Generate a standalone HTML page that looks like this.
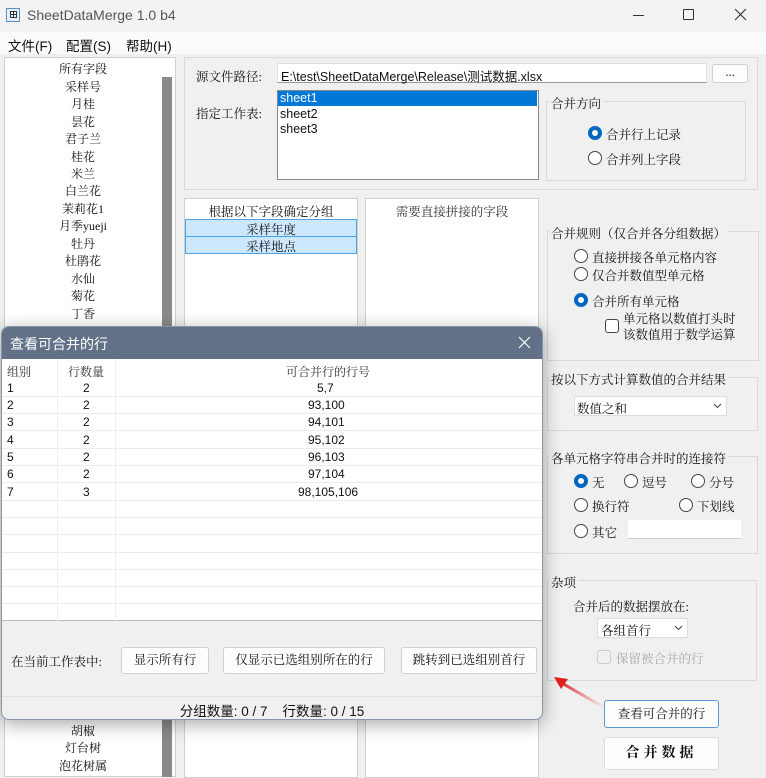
<!DOCTYPE html>
<html><head><meta charset="utf-8">
<style>
*{box-sizing:border-box;margin:0;padding:0}
body{width:766px;height:770px;overflow:hidden;background:#f0f0f0;font-family:"Liberation Sans","Noto Sans CJK SC",sans-serif;font-size:12px;color:#111;position:relative}
.a{position:absolute}
.serif{font-family:"Liberation Serif","Noto Serif CJK SC",serif}
.box{position:absolute;border:1px solid #d9d9d9}
.white{background:#fff}
.li{position:absolute;left:4px;width:158px;text-align:center;font-size:12px;font-family:"Liberation Serif","Noto Serif CJK SC",serif}
.radio{position:absolute;width:14px;height:14px;border:1px solid #444;border-radius:50%;background:#fff}
.radio.on{border:4px solid #0067c0;background:#fff}
.lbl{position:absolute;font-family:"Liberation Serif","Noto Serif CJK SC",serif;font-size:12.5px;white-space:nowrap}
.btn{position:absolute;background:#fdfdfd;border:1px solid #d0d0d0;border-radius:3px;text-align:center;font-family:"Liberation Serif","Noto Serif CJK SC",serif;font-size:12.5px}
.gtitle{position:absolute;background:#f0f0f0;padding:0 2px;font-family:"Liberation Serif","Noto Serif CJK SC",serif;font-size:12.5px}
.row{position:absolute;left:0;width:541px;height:17px;border-bottom:1px solid #ececec;font-size:12px}
.row span{position:absolute;top:1px}
</style></head><body>
<div class="a" style="left:0;top:0;width:766px;height:32px;background:#f3f3f3"></div>
<div class="a" style="left:6px;top:8px;width:14px;height:14px;border:1px solid #5a8fc8;background:#e8f1fb"></div>
<div class="a" style="left:10px;top:11px;width:7px;height:7px;border:1px solid #333"></div>
<div class="a" style="left:13px;top:11px;width:1px;height:7px;background:#333"></div>
<div class="a" style="left:10px;top:14px;width:7px;height:1px;background:#333"></div>
<div class="a" style="left:27px;top:7px;font-size:14px;color:#555">SheetDataMerge 1.0 b4</div>
<div class="a" style="left:633px;top:15px;width:11px;height:1px;background:#333"></div>
<div class="a" style="left:683px;top:9px;width:11px;height:11px;border:1px solid #333;border-radius:1px"></div>
<svg class="a" style="left:734px;top:8px" width="13" height="13"><path d="M1 1L12 12M12 1L1 12" stroke="#333" stroke-width="1.1"/></svg>
<div class="a" style="left:0;top:32px;width:766px;height:22px;background:#fbfbfb"></div>
<div class="a" style="left:8px;top:35px;font-size:13.5px">文件(F)</div>
<div class="a" style="left:66px;top:35px;font-size:13.5px">配置(S)</div>
<div class="a" style="left:126px;top:35px;font-size:13.5px">帮助(H)</div>
<div class="box white" style="left:4px;top:57px;width:172px;height:720px;border-color:#cfcfcf"></div>
<div class="a" style="left:162px;top:77px;width:10px;height:700px;background:#8a8a8a"></div>
<div class="li" style="top:60px">所有字段</div>
<div class="li" style="top:78px">采样号</div>
<div class="li" style="top:95px">月桂</div>
<div class="li" style="top:113px">昙花</div>
<div class="li" style="top:130px">君子兰</div>
<div class="li" style="top:148px">桂花</div>
<div class="li" style="top:165px">米兰</div>
<div class="li" style="top:182px">白兰花</div>
<div class="li" style="top:200px">茉莉花1</div>
<div class="li" style="top:217px">月季yueji</div>
<div class="li" style="top:235px">牡丹</div>
<div class="li" style="top:252px">杜鹃花</div>
<div class="li" style="top:270px">水仙</div>
<div class="li" style="top:287px">菊花</div>
<div class="li" style="top:305px">丁香</div>
<div class="li" style="top:722px">胡椒</div>
<div class="li" style="top:739px">灯台树</div>
<div class="li" style="top:757px">泡花树属</div>
<div class="box" style="left:184px;top:57px;width:574px;height:133px"></div>
<div class="lbl" style="left:196px;top:67px">源文件路径:</div>
<div class="a white" style="left:277px;top:63px;width:430px;height:20px;border:1px solid #e0e0e0;border-bottom-color:#999;padding:2px 3px;font-size:12.5px">E:\test\SheetDataMerge\Release\测试数据.xlsx</div>
<div class="btn" style="left:712px;top:64px;width:36px;height:19px;line-height:15px">...</div>
<div class="lbl" style="left:196px;top:104px">指定工作表:</div>
<div class="a white" style="left:277px;top:90px;width:262px;height:90px;border:1px solid #828790"></div>
<div class="a" style="left:278px;top:91px;width:259px;height:15px;background:#0078d7;color:#fff;font-size:12.5px;padding-left:2px;line-height:15px">sheet1</div>
<div class="a" style="left:280px;top:107px;font-size:12.5px">sheet2</div>
<div class="a" style="left:280px;top:122px;font-size:12.5px">sheet3</div>
<div class="box" style="left:546px;top:101px;width:200px;height:80px"></div>
<div class="gtitle" style="left:549px;top:94px">合并方向</div>
<div class="radio on" style="left:588px;top:126px"></div>
<div class="lbl" style="left:606px;top:125px">合并行上记录</div>
<div class="radio" style="left:588px;top:151px"></div>
<div class="lbl" style="left:606px;top:150px">合并列上字段</div>
<div class="box white" style="left:184px;top:198px;width:174px;height:580px;border-color:#cfcfcf"></div>
<div class="lbl" style="left:184px;top:202px;width:174px;text-align:center">根据以下字段确定分组</div>
<div class="a" style="left:185px;top:219px;width:172px;height:18px;background:#cce8ff;border:1px solid #4ba1e6;text-align:center" ><span class="serif" style="font-size:12.5px">采样年度</span></div>
<div class="a" style="left:185px;top:236px;width:172px;height:18px;background:#cce8ff;border:1px solid #4ba1e6;text-align:center"><span class="serif" style="font-size:12.5px">采样地点</span></div>
<div class="box white" style="left:365px;top:198px;width:174px;height:580px;border-color:#cfcfcf"></div>
<div class="lbl" style="left:365px;top:202px;width:174px;text-align:center;color:#333">需要直接拼接的字段</div>
<div class="box" style="left:547px;top:231px;width:212px;height:130px"></div>
<div class="gtitle" style="left:549px;top:224px">合并规则（仅合并各分组数据）</div>
<div class="radio" style="left:574px;top:249px"></div><div class="lbl" style="left:592px;top:248px">直接拼接各单元格内容</div>
<div class="radio" style="left:574px;top:267px"></div><div class="lbl" style="left:592px;top:266px">仅合并数值型单元格</div>
<div class="radio on" style="left:574px;top:293px"></div><div class="lbl" style="left:592px;top:292px">合并所有单元格</div>
<div class="a" style="left:605px;top:319px;width:14px;height:14px;border:1px solid #444;border-radius:3px;background:#fff"></div>
<div class="lbl" style="left:623px;top:311px;line-height:16px">单元格以数值打头时<br>该数值用于数学运算</div>
<div class="box" style="left:547px;top:377px;width:211px;height:54px"></div>
<div class="gtitle" style="left:549px;top:370px">按以下方式计算数值的合并结果</div>
<div class="a white" style="left:574px;top:396px;width:153px;height:20px;border:1px solid #ddd;padding:2px 2px" ><span class="serif" style="font-size:12.5px">数值之和</span></div>
<svg class="a" style="left:713px;top:403px" width="9" height="6"><path d="M1 1L4.5 4.5L8 1" stroke="#444" fill="none"/></svg>
<div class="box" style="left:547px;top:456px;width:211px;height:98px"></div>
<div class="gtitle" style="left:549px;top:449px">各单元格字符串合并时的连接符</div>
<div class="radio on" style="left:574px;top:474px"></div><div class="lbl" style="left:592px;top:473px">无</div>
<div class="radio" style="left:624px;top:474px"></div><div class="lbl" style="left:642px;top:473px">逗号</div>
<div class="radio" style="left:691px;top:474px"></div><div class="lbl" style="left:709px;top:473px">分号</div>
<div class="radio" style="left:574px;top:498px"></div><div class="lbl" style="left:592px;top:497px">换行符</div>
<div class="radio" style="left:679px;top:498px"></div><div class="lbl" style="left:697px;top:497px">下划线</div>
<div class="radio" style="left:574px;top:524px"></div><div class="lbl" style="left:592px;top:523px">其它</div>
<div class="a white" style="left:628px;top:520px;width:113px;height:19px;border-bottom:1px solid #ccc"></div>
<div class="box" style="left:547px;top:580px;width:210px;height:101px"></div>
<div class="gtitle" style="left:549px;top:573px">杂项</div>
<div class="lbl" style="left:573px;top:597px">合并后的数据摆放在:</div>
<div class="a white" style="left:597px;top:618px;width:91px;height:20px;border:1px solid #ddd;padding:2px 3px"><span class="serif" style="font-size:12.5px">各组首行</span></div>
<svg class="a" style="left:674px;top:625px" width="9" height="6"><path d="M1 1L4.5 4.5L8 1" stroke="#444" fill="none"/></svg>
<div class="a" style="left:597px;top:650px;width:14px;height:14px;border:1px solid #ccc;border-radius:3px"></div>
<div class="lbl" style="left:616px;top:649px;color:#aaa">保留被合并的行</div>
<svg class="a" style="left:550px;top:672px" width="60" height="40"><defs><linearGradient id="g" x1="1" y1="1" x2="0" y2="0"><stop offset="0" stop-color="#e05050" stop-opacity="0"/><stop offset="1" stop-color="#e02020"/></linearGradient></defs><path d="M55 36L10 10" stroke="url(#g)" stroke-width="3"/><path d="M4 5L18 7L11 17Z" fill="#e02020"/></svg>
<div class="btn" style="left:604px;top:700px;width:115px;height:28px;line-height:26px;border-color:#5b9bd5">查看可合并的行</div>
<div class="btn" style="left:604px;top:737px;width:115px;height:33px;line-height:31px;font-weight:bold;font-size:14px;letter-spacing:4px;border-color:#ddd">合并数据</div>
<div class="a" style="left:1px;top:326px;width:542px;height:394px;border-radius:8px;background:#f0f0f0;box-shadow:0 4px 18px rgba(0,0,0,.35);overflow:hidden;border:1px solid #8a96a8">
 <div class="a" style="left:0;top:0;width:542px;height:32px;background:#627188"></div>
 <div class="a" style="left:8px;top:7px;color:#fff;font-size:14px">查看可合并的行</div>
 <svg class="a" style="left:516px;top:9px" width="13" height="13"><path d="M1 1L12 12M12 1L1 12" stroke="#fff" stroke-width="1.2"/></svg>
 <div class="a white" style="left:0;top:32px;width:541px;height:262px;border-bottom:1px solid #bbb">
  <div class="a" style="left:55px;top:0;width:1px;height:262px;background:#efefef"></div>
  <div class="a" style="left:113px;top:0;width:1px;height:262px;background:#efefef"></div>
  <div class="row" style="top:3px;border:none;color:#333"><span class="serif" style="left:5px">组别</span><span class="serif" style="left:66px">行数量</span><span class="serif" style="left:284px">可合并行的行号</span></div>
  <div class="row" style="top:21px"><span style="left:5px">1</span><span style="left:81px">2</span><span style="left:315px">5,7</span></div>
  <div class="row" style="top:38px"><span style="left:5px">2</span><span style="left:81px">2</span><span style="left:306px">93,100</span></div>
  <div class="row" style="top:55px"><span style="left:5px">3</span><span style="left:81px">2</span><span style="left:306px">94,101</span></div>
  <div class="row" style="top:73px"><span style="left:5px">4</span><span style="left:81px">2</span><span style="left:306px">95,102</span></div>
  <div class="row" style="top:90px"><span style="left:5px">5</span><span style="left:81px">2</span><span style="left:306px">96,103</span></div>
  <div class="row" style="top:107px"><span style="left:5px">6</span><span style="left:81px">2</span><span style="left:306px">97,104</span></div>
  <div class="row" style="top:125px"><span style="left:5px">7</span><span style="left:81px">3</span><span style="left:296px">98,105,106</span></div>
  <div class="row" style="top:142px"></div><div class="row" style="top:159px"></div><div class="row" style="top:177px"></div><div class="row" style="top:194px"></div><div class="row" style="top:211px"></div><div class="row" style="top:228px"></div>
 </div>
 <div class="lbl" style="left:9px;top:325px">在当前工作表中:</div>
 <div class="btn" style="left:119px;top:320px;width:88px;height:27px;line-height:25px">显示所有行</div>
 <div class="btn" style="left:221px;top:320px;width:162px;height:27px;line-height:25px">仅显示已选组别所在的行</div>
 <div class="btn" style="left:399px;top:320px;width:136px;height:27px;line-height:25px">跳转到已选组别首行</div>
 <div class="a" style="left:0;top:369px;width:542px;height:1px;background:#e2e2e2"></div>
 <div class="a" style="left:0;top:373px;width:540px;text-align:center;font-size:13.5px">分组数量: 0 / 7&nbsp;&nbsp;&nbsp;&nbsp;行数量: 0 / 15</div>
</div>
</body></html>
